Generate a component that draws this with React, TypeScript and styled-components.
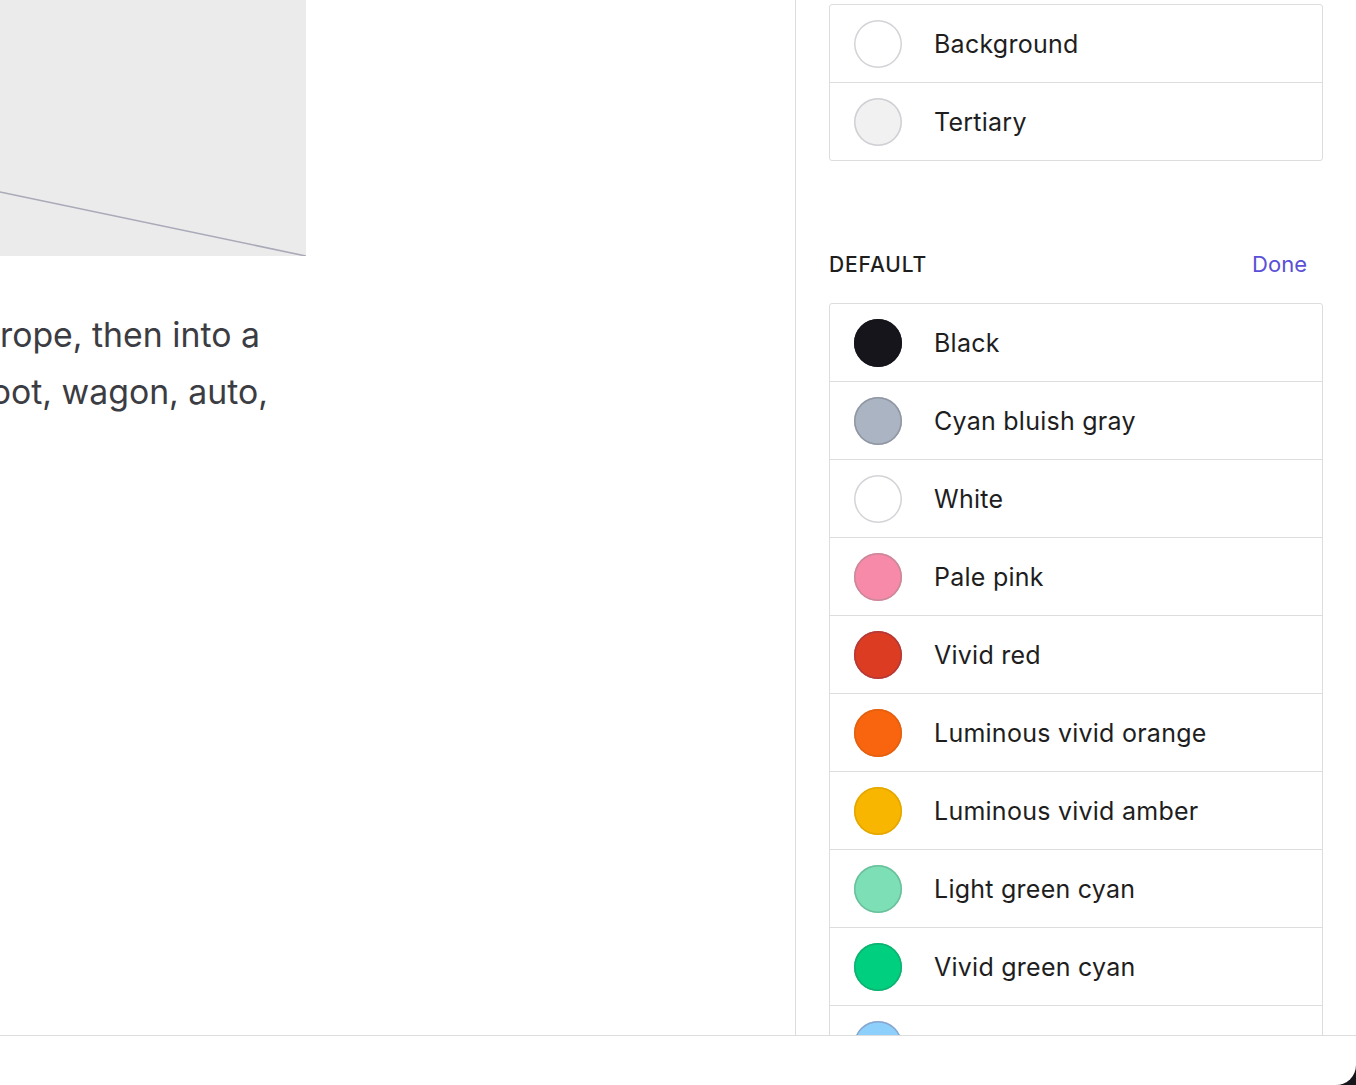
import React from "react";
import styled, { createGlobalStyle } from "styled-components";

const Global = createGlobalStyle`
  html, body { margin: 0; padding: 0; background: #ffffff; }
  body { font-family: Inter, "Noto Sans", "Liberation Sans", sans-serif; -webkit-font-smoothing: antialiased; }
  * { box-sizing: border-box; }
`;

const Frame = styled.div`
  position: relative;
  width: 1356px;
  height: 1085px;
  overflow: hidden;
  display: flex;
  flex-direction: column;
  background: #ffffff;
`;

const Workspace = styled.div`
  height: 1036px;
  flex: none;
  display: flex;
  border-bottom: 1px solid #dddddd;
`;

const Canvas = styled.main`
  width: 796px;
  flex: none;
  border-right: 1px solid #dddddd;
  overflow: hidden;
  display: flex;
  flex-direction: column;
`;

const Placeholder = styled.div`
  width: 306px;
  height: 256px;
  background: #ebebec;
  flex: none;
  svg { display: block; }
`;

const Paragraph = styled.p`
  margin: 50px 0 0 0;
  font-size: 33.8px;
  line-height: 57px;
  color: #3c3c43;
  white-space: nowrap;
  display: flex;
  flex-direction: column;
`;

const Line = styled.span<{ $shift: number }>`
  display: block;
  margin-left: ${(p) => p.$shift}px;
`;

const Sidebar = styled.aside`
  flex: 1;
  overflow: hidden;
  padding: 4px 33px 0 33px;
  display: flex;
  flex-direction: column;
`;

const Card = styled.ul`
  list-style: none;
  margin: 0;
  padding: 0;
  border: 1px solid #dddddd;
  border-radius: 3px;
  flex: none;
`;

const Row = styled.li`
  height: 77px;
  display: flex;
  align-items: center;
  gap: 32px;
  padding-left: 24px;
  & + & { border-top: 1px solid #dddddd; height: 78px; }
`;

const Swatch = styled.span<{ $color: string; $ring: string }>`
  width: 48px;
  height: 48px;
  border-radius: 50%;
  flex: none;
  background: ${(p) => p.$color};
  box-shadow: inset 0 0 0 1.5px ${(p) => p.$ring};
`;

const Label = styled.span`
  font-size: 25px;
  color: #1e1e1e;
  letter-spacing: 0.25px;
`;

const SectionHead = styled.div`
  margin-top: 92px;
  height: 22px;
  display: flex;
  align-items: center;
  justify-content: space-between;
  padding-right: 16px;
  margin-bottom: 28px;
`;

const SectionTitle = styled.h2`
  margin: 0;
  font-size: 21px;
  font-weight: 500;
  letter-spacing: 0.9px;
  color: #1e1e1e;
  text-transform: uppercase;
`;

const DoneButton = styled.button`
  border: 0;
  background: none;
  padding: 0;
  font-family: inherit;
  font-size: 22px;
  color: #5a4fd6;
  cursor: pointer;
`;

const Footer = styled.footer`
  flex: 1;
  background: #ffffff;
`;

const Corner = styled.div`
  position: absolute;
  right: 0;
  bottom: 0;
  width: 22px;
  height: 22px;
  background: #17161c;
  &::after {
    content: "";
    position: absolute;
    inset: 0;
    background: #ffffff;
    border-bottom-right-radius: 20px;
  }
`;

type Sw = { name: string; color: string; ring: string };

const theme: Sw[] = [
  { name: "Background", color: "#ffffff", ring: "#d4d4d8" },
  { name: "Tertiary", color: "#f1f1f1", ring: "#cfcfd4" },
];

const defaults: Sw[] = [
  { name: "Black", color: "#16151b", ring: "#16151b" },
  { name: "Cyan bluish gray", color: "#abb4c2", ring: "#9097a2" },
  { name: "White", color: "#ffffff", ring: "#d4d4d8" },
  { name: "Pale pink", color: "#f78aa8", ring: "#c9899a" },
  { name: "Vivid red", color: "#dc3d22", ring: "#b23a3a" },
  { name: "Luminous vivid orange", color: "#f9650f", ring: "#e26010" },
  { name: "Luminous vivid amber", color: "#f9b600", ring: "#e3a700" },
  { name: "Light green cyan", color: "#7ddfb6", ring: "#6cbf9c" },
  { name: "Vivid green cyan", color: "#00cf80", ring: "#10b070" },
  { name: "Pale cyan blue", color: "#8dd0fb", ring: "#8aa6d0" },
];

const SwatchList = ({ items }: { items: Sw[] }) => (
  <Card>
    {items.map((s) => (
      <Row key={s.name}>
        <Swatch $color={s.color} $ring={s.ring} />
        <Label>{s.name}</Label>
      </Row>
    ))}
  </Card>
);

export default function App() {
  return (
    <>
      <Global />
      <Frame>
        <Workspace>
          <Canvas>
            <Placeholder>
              <svg width="306" height="256" viewBox="0 0 306 256">
                <line x1="0" y1="192" x2="306" y2="256" stroke="#a9a9b8" strokeWidth="1.6" />
              </svg>
            </Placeholder>
            <Paragraph>
              <Line $shift={0}>rope, then into a</Line>
              <Line $shift={-30}>boot, wagon, auto,</Line>
            </Paragraph>
          </Canvas>
          <Sidebar>
            <SwatchList items={theme} />
            <SectionHead>
              <SectionTitle>Default</SectionTitle>
              <DoneButton>Done</DoneButton>
            </SectionHead>
            <SwatchList items={defaults} />
          </Sidebar>
        </Workspace>
        <Footer />
        <Corner />
      </Frame>
    </>
  );
}
